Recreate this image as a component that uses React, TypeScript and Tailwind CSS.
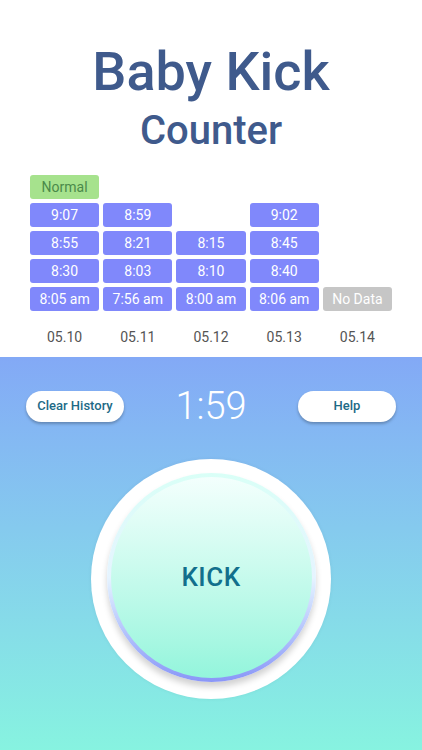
import React from 'react';

const columns: { date: string; times: (string | null)[]; empty?: boolean }[] = [
  { date: '05.10', times: ['9:07', '8:55', '8:30', '8:05 am'] },
  { date: '05.11', times: ['8:59', '8:21', '8:03', '7:56 am'] },
  { date: '05.12', times: [null, '8:15', '8:10', '8:00 am'] },
  { date: '05.13', times: ['9:02', '8:45', '8:40', '8:06 am'] },
  { date: '05.14', times: [null, null, null, 'No Data'], empty: true },
];

const App: React.FC = () => {
  return (
    <div className="w-[422px] h-[750px] flex flex-col bg-white overflow-hidden" style={{ fontFamily: 'Roboto, "Noto Sans", sans-serif' }}>
      {/* Title */}
      <div className="flex flex-col items-center pt-[40px] text-[#3f5a8c]">
        <h1 className="text-[54px] leading-[64px] font-medium">Baby Kick</h1>
        <h2 className="text-[40px] leading-[46px] font-medium mt-[4px]">Counter</h2>
      </div>

      {/* History grid */}
      <div className="flex flex-col px-[30px] mt-[21px]">
        <div className="grid grid-cols-5 gap-[4px] w-[362px]">
          <div className="h-[24px] rounded-[3px] bg-[#a6e28d] text-[#4b8a4a] text-[14px] flex items-center justify-center">Normal</div>
          <div />
          <div />
          <div />
          <div />
          {[0, 1, 2, 3].map((row) =>
            columns.map((col) => {
              const t = col.times[row];
              if (!t) return <div key={col.date + row} className="h-[24px]" />;
              return (
                <div
                  key={col.date + row}
                  className={`h-[24px] rounded-[3px] text-white text-[14px] flex items-center justify-center ${col.empty ? 'bg-[#c6c6c6]' : 'bg-[#8088fb]'}`}
                >
                  {t}
                </div>
              );
            })
          )}
        </div>
        <div className="grid grid-cols-5 w-[362px] gap-x-[4px] mt-[16px] text-[14px] text-[#555]">
          {columns.map((c) => (
            <div key={c.date} className="text-center leading-[20px]">{c.date}</div>
          ))}
        </div>
      </div>

      {/* Counter area */}
      <div className="flex-1 mt-[10px] bg-gradient-to-b from-[#83a9f6] to-[#87f3e0] flex flex-col items-center">
        <div className="w-full flex items-center justify-between px-[26px] mt-[29px]">
          <button className="w-[98px] h-[31px] rounded-full bg-white text-[#1d6a86] text-[13px] font-medium shadow-[0_2px_3px_rgba(0,0,0,0.25)]">
            Clear History
          </button>
          <div className="text-white text-[38px] font-light leading-[40px]">1:59</div>
          <button className="w-[98px] h-[31px] rounded-full bg-white text-[#1d6a86] text-[13px] font-medium shadow-[0_2px_3px_rgba(0,0,0,0.25)]">
            Help
          </button>
        </div>

        <div className="mt-[33px] w-[240px] h-[240px] rounded-full bg-white flex items-center justify-center shadow-[0_0_4px_rgba(0,0,0,0.05)]">
          <div className="w-[209px] h-[209px] rounded-full p-[4px] bg-gradient-to-b from-[#d9fff7] via-[#e6f4ff] to-[#8a96f7] shadow-[0_5px_6px_rgba(0,0,0,0.18)] mt-[-3px]">
            <div className="w-full h-full rounded-full bg-gradient-to-b from-[#f3fffd] to-[#93f5dc] flex items-center justify-center">
              <span className="text-[#126f8c] text-[26px] font-medium tracking-[0.5px]">KICK</span>
            </div>
          </div>
        </div>
      </div>
    </div>
  );
};

export default App;
